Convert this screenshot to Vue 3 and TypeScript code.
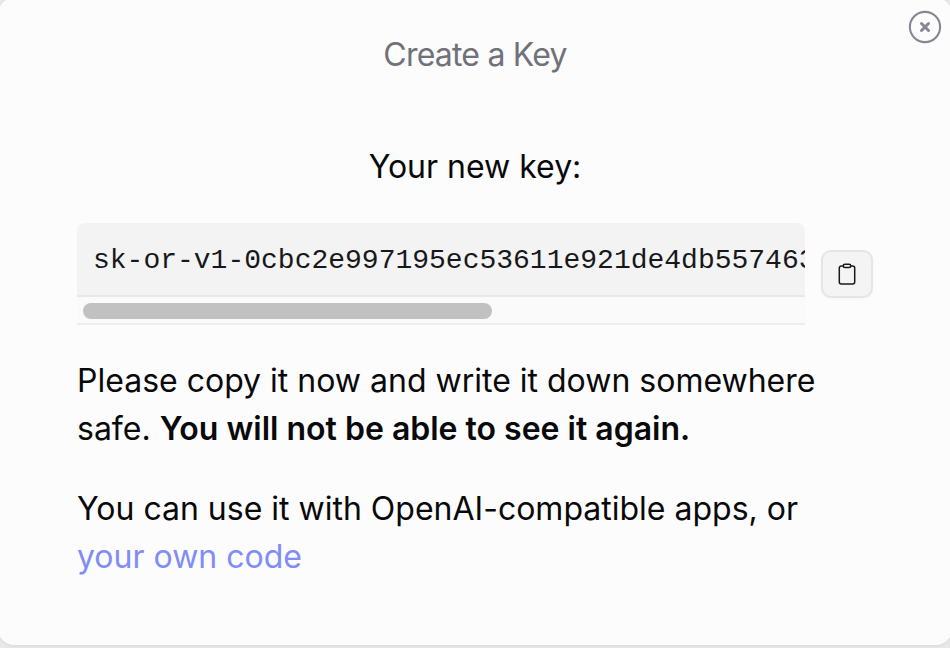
<script setup lang="ts">
const apiKey: string = 'sk-or-v1-0cbc2e997195ec53611e921de4db557463'
</script>

<template>
  <div class="backdrop">
    <section class="dialog" role="dialog">
      <button class="close" aria-label="Close">
        <svg viewBox="0 0 34 34" width="34" height="34" fill="none" stroke="currentColor">
          <circle cx="17" cy="17" r="15.1" stroke-width="2.1" />
          <path d="M13.5 13.5 20.5 20.5M20.5 13.5 13.5 20.5" stroke-width="3" stroke-linecap="round" />
        </svg>
      </button>
      <h2 class="title">Create a Key</h2>
      <p class="label">Your new key:</p>
      <div class="key-row">
        <div class="key-box">
          <code class="key">{{ apiKey }}</code>
          <div class="track"><div class="thumb"></div></div>
        </div>
        <button class="copy" aria-label="Copy">
          <svg viewBox="0 0 20 24" width="20" height="24" fill="none" stroke="currentColor" stroke-width="1.5">
            <path d="M6.2 3.9H4.3a2 2 0 0 0-2 2v14a2 2 0 0 0 2 2h11.4a2 2 0 0 0 2-2v-14a2 2 0 0 0-2-2h-1.9" />
            <rect x="6.3" y="2.2" width="7.4" height="3.2" rx="1.5" />
          </svg>
        </button>
      </div>
      <p class="note">Please copy it now and write it down somewhere<br />safe. <strong>You will not be able to see it again.</strong></p>
      <p class="note">You can use it with OpenAI-compatible apps, or<br /><a class="link">your own code</a></p>
    </section>
  </div>
</template>

<style>
body {
  background: #e8e8e8;
  overflow: hidden;
}
</style>

<style scoped>
.backdrop {
  height: 648px;
  overflow: hidden;
  background: #e8e8e8;
}
.dialog {
  position: relative;
  box-sizing: border-box;
  width: 954px;
  height: 647px;
  margin: -2px 0 0 -2px;
  padding: 33px 79px 0;
  border-radius: 16px;
  background: #fcfcfc;
  box-shadow: 0 1px 3px #d8d8d8;
  color: #09090b;
  font-family: Inter, sans-serif;
  font-size: 32px;
  line-height: 48px;
}
button {
  padding: 0;
  font: inherit;
}
.close {
  position: absolute;
  top: 12px;
  right: 10px;
  width: 34px;
  height: 34px;
  border: 0;
  background: none;
  color: #878793;
}
.close svg {
  display: block;
}
.title {
  margin: 0;
  color: #71717a;
  font-size: 32px;
  font-weight: 400;
  letter-spacing: -0.8px;
  text-align: center;
}
.label {
  margin: 64px 0 0;
  text-align: center;
}
.key-row {
  display: flex;
  align-items: center;
  gap: 16px;
  margin-top: 32px;
}
.key-box {
  width: 728px;
  height: 102px;
  overflow: hidden;
  border-radius: 8px 8px 0 0;
  background: #f3f3f3;
}
.key {
  display: block;
  box-sizing: border-box;
  height: 72px;
  padding: 18px 16px 14px;
  color: #18181b;
  font-family: "Liberation Mono", monospace;
  font-size: 28px;
  line-height: 40px;
  white-space: nowrap;
}
.track {
  box-sizing: border-box;
  height: 30px;
  padding: 6px;
  border-top: 2px solid #e8e8e8;
  border-bottom: 2px solid #ededed;
  background: #fafafa;
}
.thumb {
  width: 409px;
  height: 16px;
  border-radius: 8px;
  background: #c1c1c1;
}
.copy {
  display: grid;
  place-items: center;
  box-sizing: border-box;
  width: 52px;
  height: 48px;
  border: 2px solid #e5e5e7;
  border-radius: 10px;
  background: #f4f4f4;
  box-shadow: 0 1px 3px #00000008;
  color: #18181b;
}
.note {
  margin: 32px 0 0;
  white-space: nowrap;
}
.note strong {
  font-weight: 600;
}
.link {
  color: #818cf8;
}
</style>
